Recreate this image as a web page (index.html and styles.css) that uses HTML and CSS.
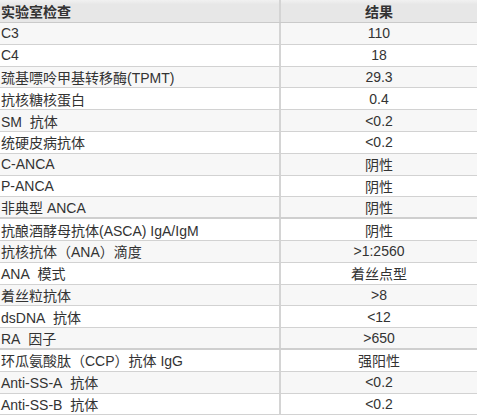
FILE: index.html
```html
<!DOCTYPE html>
<html lang="zh">
<head>
<meta charset="utf-8">
<link rel="stylesheet" href="styles.css">
</head>
<body>
<div class="lab-table">
  <div class="row head"><div class="name">实验室检查</div><div class="val">结果</div></div>
  <div class="row odd"><div class="name">C3</div><div class="val">110</div></div>
  <div class="row"><div class="name">C4</div><div class="val">18</div></div>
  <div class="row odd"><div class="name">巯基嘌呤甲基转移酶(TPMT)</div><div class="val">29.3</div></div>
  <div class="row"><div class="name">抗核糖核蛋白</div><div class="val">0.4</div></div>
  <div class="row odd"><div class="name">SM&nbsp; 抗体</div><div class="val">&lt;0.2</div></div>
  <div class="row"><div class="name">统硬皮病抗体</div><div class="val">&lt;0.2</div></div>
  <div class="row odd"><div class="name">C-ANCA</div><div class="val">阴性</div></div>
  <div class="row"><div class="name">P-ANCA</div><div class="val">阴性</div></div>
  <div class="row odd sep"><div class="name">非典型 ANCA</div><div class="val">阴性</div></div>
  <div class="row"><div class="name">抗酿酒酵母抗体(ASCA) IgA/IgM</div><div class="val">阴性</div></div>
  <div class="row odd"><div class="name">抗核抗体（ANA）滴度</div><div class="val">&gt;1:2560</div></div>
  <div class="row"><div class="name">ANA&nbsp; 模式</div><div class="val">着丝点型</div></div>
  <div class="row odd"><div class="name">着丝粒抗体</div><div class="val">&gt;8</div></div>
  <div class="row"><div class="name">dsDNA&nbsp; 抗体</div><div class="val">&lt;12</div></div>
  <div class="row odd sep"><div class="name">RA&nbsp; 因子</div><div class="val">&gt;650</div></div>
  <div class="row"><div class="name">环瓜氨酸肽（CCP）抗体 IgG</div><div class="val">强阳性</div></div>
  <div class="row odd"><div class="name">Anti-SS-A&nbsp; 抗体</div><div class="val">&lt;0.2</div></div>
  <div class="row"><div class="name">Anti-SS-B&nbsp; 抗体</div><div class="val">&lt;0.2</div></div>
</div>
</body>
</html>
```
FILE: styles.css
```css
html, body {
  margin: 0;
  padding: 0;
  background: #ffffff;
}
body {
  font-family: "Liberation Sans", Arial, "Noto Sans CJK SC", sans-serif;
  font-size: 14px;
  color: #333333;
}
.lab-table {
  width: 477px;
  display: flex;
  flex-direction: column;
}
.row {
  display: flex;
  height: 21.8px;
  box-sizing: border-box;
  border-bottom: 1px solid #d2d2d2;
  background: #ffffff;
}
.row.odd {
  background: #f7f7f7;
}
.row.sep {
  border-bottom: 2px solid #cfcfcf;
}
.row.head {
  height: 23px;
  background: linear-gradient(#f1f1f1, #e7e7e7 20%, #e7e7e7);
  border-bottom: 1px solid #cacaca;
  font-weight: bold;
}
.name {
  width: 279px;
  padding-left: 1px;
  box-sizing: border-box;
  display: flex;
  align-items: center;
  white-space: pre;
  overflow: hidden;
}
.val {
  flex: 1;
  border-left: 2px solid #d4d4d4;
  display: flex;
  align-items: center;
  justify-content: center;
  white-space: nowrap;
}
```
